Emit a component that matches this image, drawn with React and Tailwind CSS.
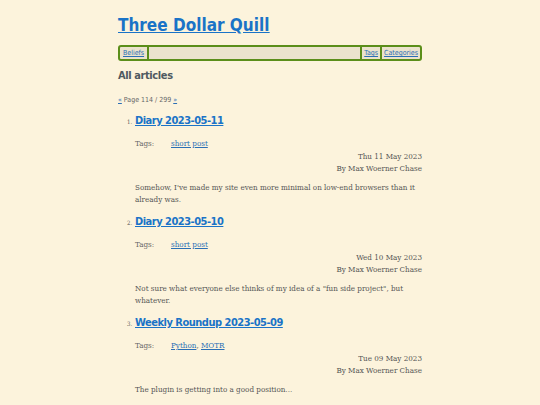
const posts = [
    {
        title: 'Diary 2023-05-11',
        tags: ['short post'],
        date: 'Thu 11 May 2023',
        summary: "Somehow, I've made my site even more minimal on low-end browsers than it already was.",
    },
    {
        title: 'Diary 2023-05-10',
        tags: ['short post'],
        date: 'Wed 10 May 2023',
        summary: 'Not sure what everyone else thinks of my idea of a "fun side project", but whatever.',
    },
    {
        title: 'Weekly Roundup 2023-05-09',
        tags: ['Python', 'MOTR'],
        date: 'Tue 09 May 2023',
        summary: 'The plugin is getting into a good position...',
    },
];

const sans = "font-['DejaVu_Sans',sans-serif] [font-stretch:condensed]";
const slab = "font-['DejaVu_Serif',serif] [font-stretch:condensed]";

const App = () => {
    return (
        <div className="min-h-[405px] bg-[#fcf3dc] text-[#555]">
            <div className="mx-auto w-[304px] pt-[13px]">
                <h1 className={`${sans} text-[17px] font-bold leading-[24px] text-[#1a73c7] underline`}>
                    <a href="#">Three Dollar Quill</a>
                </h1>

                <nav className={`${sans} mt-[8px] flex h-[16px] items-stretch rounded-[3px] border-2 border-[#5b8e1a] bg-[#ebe3cd] text-[7px] leading-[12px]`}>
                    <a href="#" className="border-r-2 border-[#5b8e1a] px-[3px] text-[#2b6fb5] underline">Beliefs</a>
                    <div className="flex-1" />
                    <a href="#" className="border-x-2 border-[#5b8e1a] px-[2px] text-[#2b6fb5] underline">Tags</a>
                    <a href="#" className="px-[2px] text-[#2b6fb5] underline">Categories</a>
                </nav>

                <h2 className={`${sans} mt-[6px] text-[11px] font-bold leading-[18px] tracking-[-0.4px] text-[#4f5960]`}>All articles</h2>

                <p className={`${sans} mt-[10px] text-[7px] leading-[10px] text-[#666]`}>
                    <a href="#" className="text-[#2b6fb5] underline">«</a> Page 114 / 299{' '}
                    <a href="#" className="text-[#2b6fb5] underline">»</a>
                </p>

                <ol className="mt-[7px] list-none pl-[17px]">
                    {posts.map((post, i) => (
                        <li key={post.title} className="mb-[7px]">
                            <div className="flex items-baseline">
                                <span className={`${slab} -ml-[8px] w-[8px] text-[6px] text-[#555]`}>{i + 1}.</span>
                                <a href="#" className={`${sans} text-[11px] font-bold leading-[18px] tracking-[-0.5px] text-[#1a73c7] underline`}>{post.title}</a>
                            </div>
                            <div className={`${slab} mt-[9px] flex text-[8px] leading-[10px]`}>
                                <span className="w-[36px] text-[#666]">Tags:</span>
                                <span>
                                    {post.tags.map((t, j) => (
                                        <span key={t}>
                                            {j > 0 && ', '}
                                            <a href="#" className="text-[#2b6fb5] underline">{t}</a>
                                        </span>
                                    ))}
                                </span>
                            </div>
                            <div className={`${slab} mt-[2px] text-right text-[8px] leading-[12px] text-[#555]`}>
                                <div>{post.date}</div>
                                <div>By Max Woerner Chase</div>
                            </div>
                            <p className={`${slab} mt-[7px] text-[8px] leading-[12px] text-[#555]`}>{post.summary}</p>
                        </li>
                    ))}
                </ol>
            </div>
        </div>
    );
};

export default App;
